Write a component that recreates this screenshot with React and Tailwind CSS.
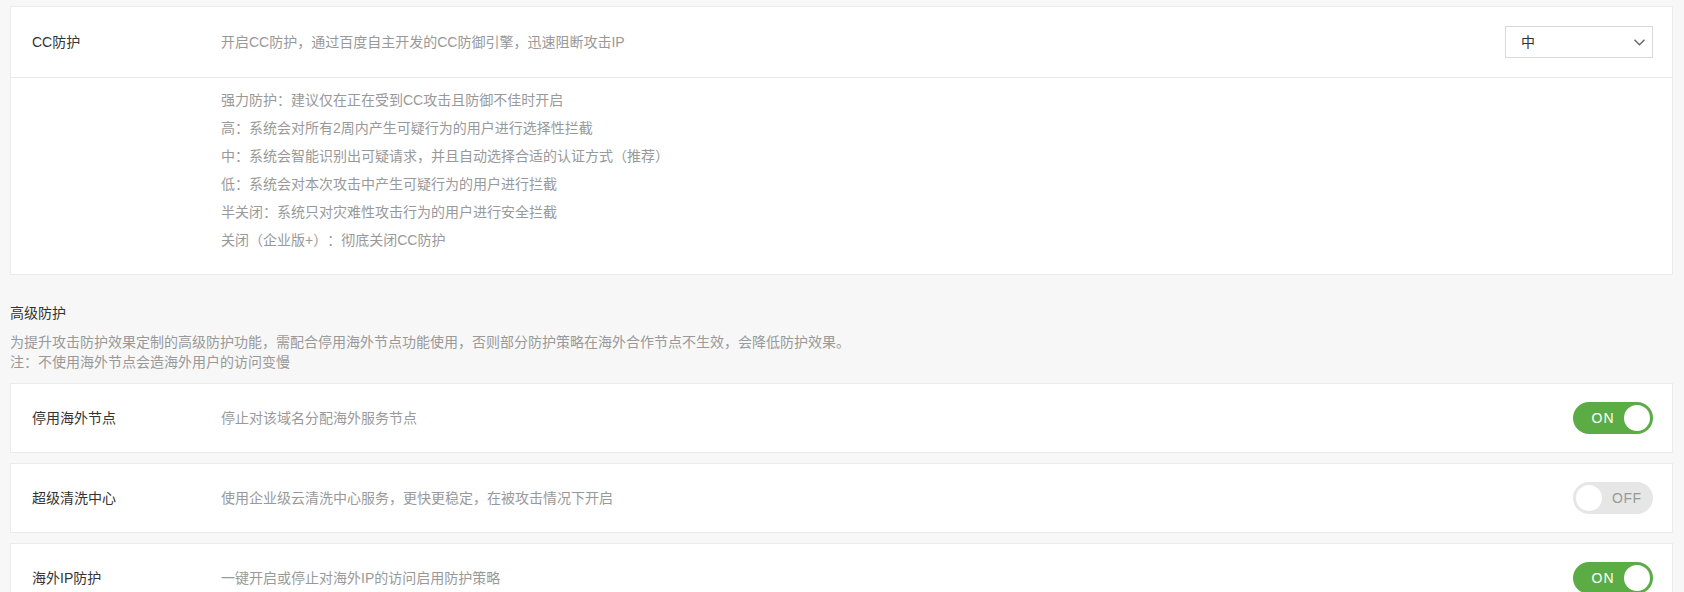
import React, { useState } from 'react';

const FONT = '"Liberation Sans", "Noto Sans CJK SC", sans-serif';

const levels = [
  '强力防护：建议仅在正在受到CC攻击且防御不佳时开启',
  '高：系统会对所有2周内产生可疑行为的用户进行选择性拦截',
  '中：系统会智能识别出可疑请求，并且自动选择合适的认证方式（推荐）',
  '低：系统会对本次攻击中产生可疑行为的用户进行拦截',
  '半关闭：系统只对灾难性攻击行为的用户进行安全拦截',
  '关闭（企业版+）：彻底关闭CC防护',
];

const advanced = [
  { id: 'overseas', label: '停用海外节点', desc: '停止对该域名分配海外服务节点', on: true },
  { id: 'scrub', label: '超级清洗中心', desc: '使用企业级云清洗中心服务，更快更稳定，在被攻击情况下开启', on: false },
  { id: 'ipguard', label: '海外IP防护', desc: '一键开启或停止对海外IP的访问启用防护策略', on: true },
];

const Toggle = ({ on, onClick }) => (
  <button
    onClick={onClick}
    className={`flex items-center w-[80px] h-[32px] rounded-full p-[1px] ${
      on ? 'bg-[#5cac45] flex-row-reverse' : 'bg-[#e6e6e6] flex-row'
    }`}
  >
    <span className={`w-[30px] h-[30px] rounded-full bg-white shrink-0 border-2 ${on ? 'border-[#5cac45]' : 'border-[#e6e6e6]'}`} />
    {on ? (
      <span className="flex-1 text-center text-[14px] tracking-[1px] text-white pl-[10px]">ON</span>
    ) : (
      <span className="flex-1 text-left text-[14px] tracking-[0.5px] text-[#999] pl-[8px]">OFF</span>
    )}
  </button>
);

const Row = ({ label, desc, tall, children }) => (
  <div className={`flex items-center pl-[21px] pr-[19px] ${tall ? 'h-[70px]' : 'h-[68px]'}`}>
    <div className="w-[189px] text-[14px] text-[#333]">{label}</div>
    <div className="flex-1 text-[14px] text-[#999]">{desc}</div>
    {children}
  </div>
);

export default function App() {
  const [switches, setSwitches] = useState(
    Object.fromEntries(advanced.map((a) => [a.id, a.on]))
  );

  return (
    <div
      className="min-h-screen bg-[#f7f7f7] pt-[6px] pl-[10px] pr-[11px] [text-spacing-trim:space-all]"
      style={{ fontFamily: FONT }}
    >
      <div className="bg-white border border-[#ebebeb]">
        <Row tall label="CC防护" desc="开启CC防护，通过百度自主开发的CC防御引擎，迅速阻断攻击IP">
          <div className="flex items-center justify-between w-[148px] h-[32px] border border-[#d9d9d9] pl-[15px] pr-[7px] text-[14px] text-[#333]">
            <span>中</span>
            <svg width="11" height="7" viewBox="0 0 11 7" fill="none" stroke="#666" strokeWidth="1.4">
              <polyline points="0.5,0.8 5.5,5.8 10.5,0.8" />
            </svg>
          </div>
        </Row>
        <div className="border-t border-[#ebebeb] pl-[210px] pt-[8px] pb-[20px]">
          {levels.map((l) => (
            <div key={l} className="text-[14px] leading-[28px] text-[#999]">{l}</div>
          ))}
        </div>
      </div>

      <div className="mt-[28px] text-[14px] leading-[20px] text-[#333]">高级防护</div>
      <div className="mt-[9px] text-[14px] leading-[20px] text-[#999]">
        <div>为提升攻击防护效果定制的高级防护功能，需配合停用海外节点功能使用，否则部分防护策略在海外合作节点不生效，会降低防护效果。</div>
        <div>注：不使用海外节点会造海外用户的访问变慢</div>
      </div>

      <div className="mt-[11px] flex flex-col gap-[10px]">
        {advanced.map((a) => (
          <div key={a.id} className="bg-white border border-[#ebebeb]">
            <Row label={a.label} desc={a.desc}>
              <Toggle
                on={switches[a.id]}
                onClick={() => setSwitches((s) => ({ ...s, [a.id]: !s[a.id] }))}
              />
            </Row>
          </div>
        ))}
      </div>
    </div>
  );
}
